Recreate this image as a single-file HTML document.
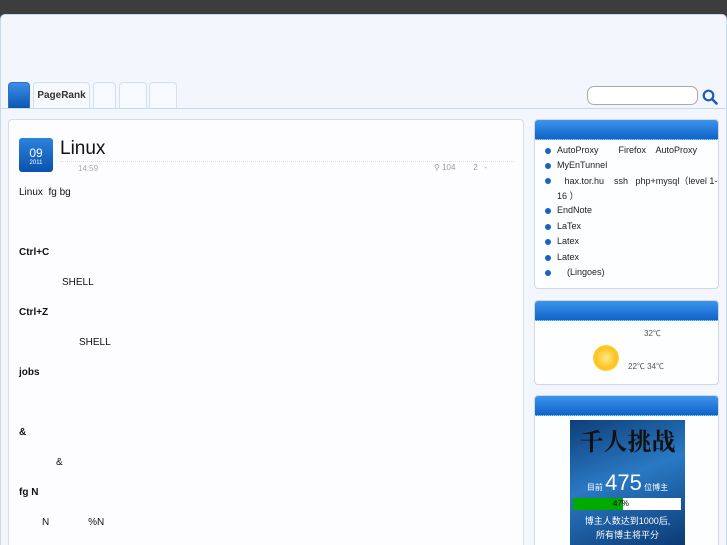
<!DOCTYPE html>
<html><head><meta charset="utf-8"><style>
*{margin:0;padding:0;box-sizing:border-box}
html,body{width:727px;height:545px;overflow:hidden}
body{background:#3d3d3d;font-family:"Liberation Sans","Noto Sans CJK SC",sans-serif;position:relative}
.wrap{position:absolute;left:0;top:14px;width:727px;height:531px;background:#f3f7fd;border:1px solid #c5d9ef;border-bottom:none;border-radius:5px 5px 0 0}
.abs{position:absolute}
.tab{position:absolute;top:82px;height:26px;border:1px solid #d3e0ef;border-bottom:none;border-radius:4px 4px 0 0;background:#f6f9fe;font-size:10px;font-weight:bold;color:#333;line-height:26px;text-align:center}
.line{position:absolute;left:0;top:108px;width:727px;height:1px;background:#c5d9ef}
.card{position:absolute;left:8px;top:119px;width:516px;height:426px;background:#fdfdff;border:1px solid #d6dde8;border-bottom:none;border-radius:4px 4px 0 0}
.p{position:absolute;font-size:10px;color:#111}
.b{font-weight:bold}
.side{position:absolute;left:534px;width:185px;background:#fdfeff;border:1px solid #d0d8e4;border-radius:4px;overflow:hidden}
.sh{height:20px;background:linear-gradient(#3d94ec,#0f63c8);border-bottom:1px dotted #9cc}
.li{position:absolute;left:22px;font-size:9px;color:#222;line-height:15px}
.dot{position:absolute;left:10px;width:6px;height:6px;border-radius:50%;background:#1a63c0}
</style></head><body>
<div class="wrap"></div>
<div class="tab" style="left:8px;width:22px;background:linear-gradient(#3a8fe6,#0c56b2);border-color:#2a70c4"></div>
<div class="tab" style="left:33px;width:57px">PageRank</div>
<div class="tab" style="left:93px;width:23px"></div>
<div class="tab" style="left:119px;width:28px"></div>
<div class="tab" style="left:149px;width:28px"></div>
<div class="line"></div>
<div class="abs" style="left:587px;top:86px;width:111px;height:19px;border:1px solid #aaa;border-radius:7px;background:#fff"></div>
<svg class="abs" style="left:702px;top:89px" width="16" height="16" viewBox="0 0 16 16"><circle cx="6.5" cy="6.5" r="4.8" fill="none" stroke="#1a5db8" stroke-width="2.2"/><path d="M10 10l4.5 4.5" stroke="#1a5db8" stroke-width="2.6" stroke-linecap="round"/></svg>
<div class="card"></div>
<div class="abs" style="left:19px;top:138px;width:34px;height:34px;border-radius:3px;background:linear-gradient(#2c83dc,#0a52ad);color:#fff;text-align:center">
<div style="font-size:12px;margin-top:9px;line-height:12px">09</div><div style="font-size:6px;line-height:8px">2011</div></div>
<div class="abs" style="left:60px;top:138px;font-size:19px;color:#111">Linux</div>
<div class="abs" style="left:60px;top:161px;width:454px;border-top:1px dotted #ddd"></div>
<div class="abs" style="left:78px;top:164px;font-size:8px;color:#aaa">14:59</div>
<div class="abs" style="left:434px;top:163px;font-size:8px;color:#999">&#9906; 104 &nbsp;&nbsp;&nbsp;&nbsp;&nbsp;&nbsp; 2 &nbsp; -</div>
<div class="p" style="left:19px;top:187px">Linux&nbsp; fg bg</div>
<div class="p b" style="left:19px;top:247px">Ctrl+C</div>
<div class="p" style="left:62px;top:277px">SHELL</div>
<div class="p b" style="left:19px;top:307px">Ctrl+Z</div>
<div class="p" style="left:79px;top:337px">SHELL</div>
<div class="p b" style="left:19px;top:367px">jobs</div>
<div class="p b" style="left:19px;top:427px">&amp;</div>
<div class="p" style="left:56px;top:457px">&amp;</div>
<div class="p b" style="left:19px;top:487px">fg N</div>
<div class="p" style="left:42px;top:517px">N&nbsp;&nbsp;&nbsp;&nbsp;&nbsp;&nbsp;&nbsp;&nbsp;&nbsp;&nbsp;&nbsp;&nbsp;&nbsp; %N</div>

<div class="side" style="top:119px;height:170px"><div class="sh"></div>
<div class="dot" style="top:28px"></div><div class="li" style="top:23px">AutoProxy&nbsp;&nbsp;&nbsp;&nbsp;&nbsp;&nbsp;&nbsp; Firefox&nbsp;&nbsp;&nbsp; AutoProxy</div>
<div class="dot" style="top:43px"></div><div class="li" style="top:38px">MyEnTunnel</div>
<div class="dot" style="top:58px"></div><div class="li" style="top:54px;width:162px">&nbsp;&nbsp; hax.tor.hu&nbsp;&nbsp;&nbsp; ssh&nbsp;&nbsp; php+mysql（level 1-<br>16 ）</div>
<div class="dot" style="top:88px"></div><div class="li" style="top:83px">EndNote</div>
<div class="dot" style="top:104px"></div><div class="li" style="top:99px">LaTex</div>
<div class="dot" style="top:119px"></div><div class="li" style="top:114px">Latex</div>
<div class="dot" style="top:135px"></div><div class="li" style="top:130px">Latex</div>
<div class="dot" style="top:150px"></div><div class="li" style="top:145px">&nbsp;&nbsp;&nbsp; (Lingoes)</div>
</div>

<div class="side" style="top:300px;height:85px"><div class="sh"></div>
<div class="abs" style="left:109px;top:27px;font-size:8px;color:#555">32℃</div>
<div class="abs" style="left:58px;top:44px;width:26px;height:26px;border-radius:50%;background:radial-gradient(#ffe98a,#ffc21a 60%,#ffd86a 75%,rgba(255,230,150,0) 100%)"></div>
<div class="abs" style="left:93px;top:60px;font-size:8px;color:#555">22℃ 34℃</div>
</div>

<div class="side" style="top:395px;height:150px;border-bottom:none;border-radius:4px 4px 0 0"><div class="sh"></div>
<div class="abs" style="left:35px;top:24px;width:115px;height:126px;overflow:hidden;background:linear-gradient(160deg,#0d3f7a,#2a79c4 45%,#0b3a74)">
<div class="abs" style="left:0;top:2px;width:115px;text-align:center;font-size:24px;color:#111;font-family:'Noto Serif CJK SC',serif;font-weight:bold">千人挑战</div>
<div class="abs" style="left:0;top:50px;width:115px;text-align:center;color:#fff;font-size:8px">目前 <span style="font-size:22px">475</span> 位博主</div>
<div class="abs" style="left:3px;top:78px;width:108px;height:12px;background:#fff"><div style="width:50px;height:12px;background:#0a0"></div><div class="abs" style="left:40px;top:0;font-size:8px;line-height:12px">47%</div></div>
<div class="abs" style="left:0;top:94px;width:115px;text-align:center;color:#fff;font-size:9px;line-height:14px">博主人数达到1000后,<br>所有博主将平分</div>
</div></div>
</body></html>
